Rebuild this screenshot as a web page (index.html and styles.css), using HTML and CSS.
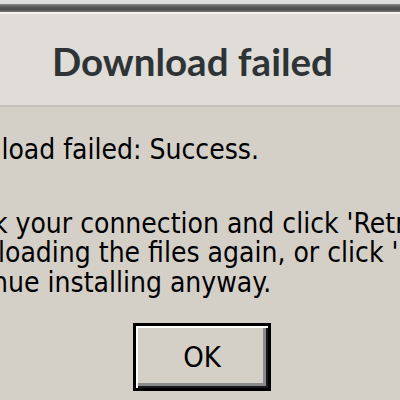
FILE: index.html
```html
<!DOCTYPE html>
<html>
<head>
<meta charset="utf-8">
<link rel="stylesheet" href="styles.css">
</head>
<body>
<div class="window">
  <div class="topstrip"></div>
  <div class="frame"></div>
  <div class="highlight"></div>
  <div class="header">
    <h1 class="title">Download failed</h1>
  </div>
  <div class="content">
    <p class="msg">Download failed: Success.</p>
    <p class="msg second">Check your connection and click 'Retry' to try<br>downloading the files again, or click 'No' to<br>continue installing anyway.</p>
    <div class="actions">
      <button class="btn">OK</button>
    </div>
  </div>
</div>
</body>
</html>
```
FILE: styles.css
```css
html, body {
  margin: 0;
  padding: 0;
  width: 400px;
  height: 400px;
  overflow: hidden;
  background: #d4d0c8;
}
.window {
  width: 400px;
  height: 400px;
  overflow: hidden;
}
.topstrip {
  height: 4px;
  background: #dddddd;
}
.frame {
  height: 8px;
  background: linear-gradient(#8a8a8a, #555555 40%, #4e4e4e 70%, #7a7a7a);
}
.highlight {
  height: 2px;
  background: #f3f3f2;
}
.header {
  height: 93px;
  background: #e0ddd9;
  border-bottom: 2px solid #c4c0ba;
  box-sizing: border-box;
  padding: 27px 0 0 52px;
}
.title {
  margin: 0;
  font-family: "Lato", "Noto Sans", sans-serif;
  font-weight: bold;
  font-size: 38.5px;
  line-height: 40px;
  color: #2e3436;
  white-space: nowrap;
}
.content {
  padding-top: 28px;
  font-family: "DejaVu Sans Condensed", "DejaVu Sans", sans-serif;
  font-size: 28px;
  line-height: 29.5px;
  color: #000;
}
.msg {
  margin: 0 0 0 -70px;
  white-space: nowrap;
}
.msg.second {
  margin-top: 44px;
}
.actions {
  padding: 26px 0 0 133px;
}
.btn {
  display: block;
  box-sizing: border-box;
  width: 138px;
  height: 68px;
  margin: 0;
  padding: 0;
  background: #d4d0c8;
  border: 3px solid #000;
  box-shadow: inset 2px 2px 0 #ffffff, inset -2px -2px 0 #1a1a1a, inset -5px -5px 0 #8a8a8a;
  font-family: "DejaVu Sans Condensed", "DejaVu Sans", sans-serif;
  font-size: 29px;
  color: #000;
}
```
